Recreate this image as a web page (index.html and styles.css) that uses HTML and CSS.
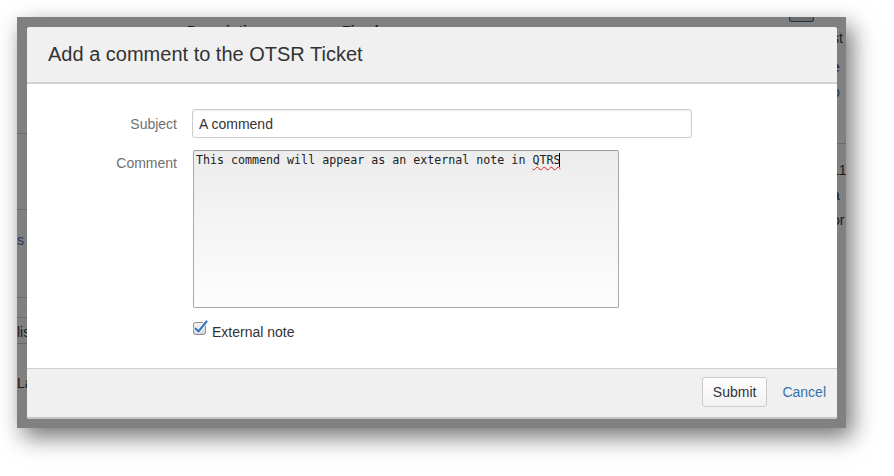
FILE: index.html
```html
<!DOCTYPE html>
<html lang="en">
<head>
    <meta charset="UTF-8">
    <meta name="viewport" content="width=device-width, initial-scale=1.0">
    <title>Add a comment to the OTSR Ticket</title>
    <link rel="stylesheet" href="styles.css">
</head>
<body>
    <div class="shot">
        <!-- page behind the dimmed overlay, only its edges show -->
        <div class="page">
            <div class="page-head">
                <span class="head-desc">Description</span>
                <span class="head-fixed">Fixed</span>
                <span class="head-btn"></span>
            </div>
            <div class="page-body">
                <div class="page-left">
                    <div class="cell cell-a"></div>
                    <div class="cell cell-b"></div>
                    <div class="cell cell-c"><span class="link">s</span></div>
                    <div class="cell cell-d"></div>
                    <div class="cell cell-e">lis</div>
                    <div class="cell cell-f">La</div>
                </div>
                <div class="page-right">
                    <div class="rcell rcell-top">
                        <div class="rline">st</div>
                        <div class="rline rline-e">e</div>
                        <div class="rline rline-o"><span class="link">o</span></div>
                    </div>
                    <div class="rcell rcell-bottom">
                        <div>11</div>
                        <div>a</div>
                        <div>or</div>
                    </div>
                </div>
            </div>
        </div>

        <div class="dialog">
            <div class="dialog-header">
                <h2>Add a comment to the OTSR Ticket</h2>
            </div>
            <form class="dialog-body">
                <label class="field-label" for="subject">Subject</label>
                <input type="text" id="subject" class="text-input" value="A commend">

                <label class="field-label field-label-top">Comment</label>
                <div class="comment-area">This commend will appear as an external note in <span class="misspelled">QTRS</span><span class="caret"></span></div>

                <div></div>
                <div class="check-row">
                    <svg class="check" width="15" height="15" viewBox="0 0 15 15">
                        <defs>
                            <linearGradient id="boxfill" x1="0" y1="0" x2="0" y2="1">
                                <stop offset="0" stop-color="#f6f6f6"/>
                                <stop offset="1" stop-color="#cfcfcf"/>
                            </linearGradient>
                        </defs>
                        <rect x="0.5" y="2.5" width="12" height="12" rx="2" fill="url(#boxfill)" stroke="#8c8c8c"/>
                        <path d="M2.5 8.5 L5.5 11.5 L13.5 1.5" fill="none" stroke="#fff" stroke-width="4" stroke-linecap="round" stroke-linejoin="round"/>
                        <path d="M2.5 8.5 L5.5 11.5 L13.5 1.5" fill="none" stroke="#3a78c2" stroke-width="2.2" stroke-linecap="round" stroke-linejoin="round"/>
                    </svg>
                    <span class="check-label">External note</span>
                </div>
            </form>
            <div class="dialog-footer">
                <button type="button" class="btn">Submit</button>
                <a href="#" class="cancel">Cancel</a>
            </div>
        </div>
    </div>
</body>
</html>
```

FILE: styles.css
```css
body {
    margin: 0;
    min-height: 476px;
    background-color: #fff;
    font-family: 'Liberation Sans', Arial, sans-serif;
    font-size: 14px;
    color: #333;
}

.shot {
    display: grid;
    width: 829px;
    height: 411px;
    margin: 17px 0 48px 17px;
    background-color: #808080;
    overflow: hidden;
    box-shadow: 6px 9px 22px rgba(0, 0, 0, 0.55);
}

.page, .dialog {
    grid-area: 1 / 1;
}

/* dimmed page */
.page {
    display: flex;
    flex-direction: column;
    color: #1a1a1a;
}

.page .link {
    color: #1b3958;
}

.page-head {
    display: flex;
    height: 18px;
    padding-left: 170px;
    margin-top: 5px;
    font-weight: bold;
    line-height: 18px;
}

.head-desc {
    width: 155px;
}

.head-btn {
    width: 23px;
    height: 4px;
    margin: -5px 0 0 410px;
    border: 1px solid #1e324c;
    border-top: none;
    border-radius: 0 0 3px 3px;
    background-color: #6c6c6c;
}

.page-body {
    display: flex;
    justify-content: space-between;
    margin-top: -23px;
}

.page-left {
    width: 40px;
    display: flex;
    flex-direction: column;
    white-space: nowrap;
}

.cell {
    border-bottom: 1px solid #6a6a6a;
}

.cell-a { height: 116px; }
.cell-b { height: 75px; }
.cell-c { height: 66px; padding-top: 21px; line-height: 18px; }
.cell-d { height: 19px; }
.cell-e { height: 25px; line-height: 28px; }
.cell-f { border-bottom: none; padding-top: 30px; line-height: 18px; }

.page-right {
    width: 14px;
    display: flex;
    flex-direction: column;
    white-space: nowrap;
    overflow: hidden;
}

.rcell-top {
    height: 127px;
    padding-top: 12px;
    box-sizing: border-box;
    border-bottom: 1px solid #6a6a6a;
    line-height: 18px;
}

.rline-e { margin-top: 11px; }
.rline-o { margin-top: 7px; }

.rcell-bottom {
    padding-top: 14px;
    line-height: 25px;
}

/* dialog */
.dialog {
    display: flex;
    flex-direction: column;
    margin: 10px 9px 9px 10px;
    background-color: #fff;
    border-radius: 3px;
    overflow: hidden;
}

.dialog-header {
    display: flex;
    align-items: center;
    height: 55px;
    padding-left: 21px;
    background-color: #f0f0f0;
    border-bottom: 2px solid #d2d2d2;
}

.dialog-header h2 {
    margin: 0;
    font-size: 20px;
    font-weight: normal;
    color: #333;
}

.dialog-body {
    flex: 1;
    display: grid;
    grid-template-columns: 150px 1fr;
    grid-auto-rows: min-content;
    column-gap: 15px;
    row-gap: 12px;
    margin: 0;
    padding-top: 25px;
}

.field-label {
    align-self: center;
    text-align: right;
    color: #707070;
}

.field-label-top {
    align-self: start;
    padding-top: 5px;
}

.text-input {
    width: 500px;
    height: 29px;
    box-sizing: border-box;
    padding: 0 6px;
    border: 1px solid #cdcdcd;
    border-radius: 3px;
    box-shadow: inset 0 1px 2px rgba(0, 0, 0, 0.08);
    font-family: 'Liberation Sans', Arial, sans-serif;
    font-size: 14px;
    color: #333;
}

.comment-area {
    width: 426px;
    height: 158px;
    box-sizing: border-box;
    margin-left: 1px;
    padding: 2px 2px;
    border: 1px solid #a8a8a8;
    border-top-color: #9a9a9a;
    border-radius: 2px;
    background: linear-gradient(#ececec, #fdfdfd);
    font-family: 'DejaVu Sans Mono', monospace;
    font-size: 11.65px;
    line-height: 14px;
    color: #222;
}

.misspelled {
    text-decoration: underline wavy #e02020;
    text-decoration-thickness: 1px;
    text-underline-offset: 2px;
}

.caret {
    display: inline-block;
    width: 1px;
    height: 14px;
    margin-left: -1px;
    vertical-align: -3px;
    background-color: #000;
}

.check-row {
    display: flex;
    align-items: flex-start;
    gap: 4px;
    margin-left: 1px;
    height: 22px;
}

.check {
    flex: none;
}

.check-label {
    line-height: 20px;
    margin-top: 2px;
}

.dialog-footer {
    display: flex;
    align-items: center;
    justify-content: flex-end;
    gap: 15px;
    height: 51px;
    padding: 0 11px 2px 0;
    box-sizing: border-box;
    background-color: #f0f0f0;
    border-top: 1px solid #cfcfcf;
    border-bottom: 2px solid #c4c4c4;
}

.btn {
    height: 30px;
    padding: 0 10px;
    border: 1px solid #cbcbcb;
    border-radius: 3px;
    background: linear-gradient(#ffffff, #f2f2f2);
    font-family: 'Liberation Sans', Arial, sans-serif;
    font-size: 14px;
    color: #333;
    cursor: pointer;
}

.cancel {
    color: #3572b0;
    text-decoration: none;
}
```
